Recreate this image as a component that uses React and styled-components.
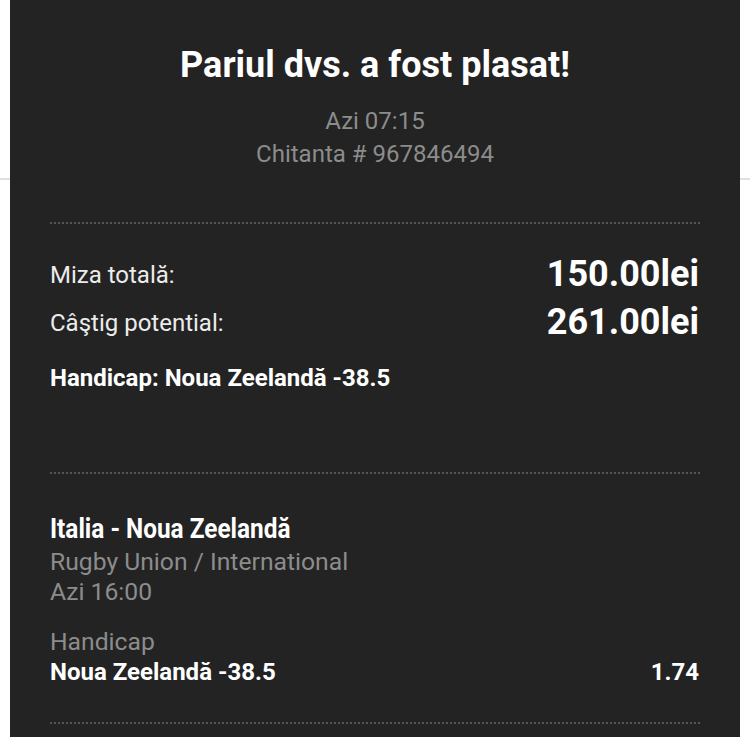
import React from 'react';
import styled, { createGlobalStyle } from 'styled-components';

const GlobalStyle = createGlobalStyle`
  html, body {
    margin: 0;
    padding: 0;
    background: #ffffff;
    font-family: Roboto, "Noto Sans", sans-serif;
    overflow: hidden;
  }
`;

const Page = styled.div`
  position: relative;
  width: 750px;
  height: 737px;
`;

const BackHeader = styled.div`
  height: 178px;
  border-bottom: 2px solid #e0e0e0;
`;

const Receipt = styled.div`
  position: absolute;
  top: 0;
  left: 10px;
  width: 730px;
  height: 737px;
  box-sizing: border-box;
  background: #232323;
  padding: 45px 40px 0;
  color: #fff;
`;

const Title = styled.h1`
  margin: 0;
  font-size: 36px;
  line-height: 40px;
  font-weight: 700;
  text-align: center;
`;

const Meta = styled.div`
  margin-top: 20px;
  text-align: center;
  color: #8c8c8c;
  font-size: 24px;
  line-height: 33px;
`;

const Divider = styled.div`
  height: 2px;
  margin-top: ${({ $gap }) => $gap}px;
  background-image: linear-gradient(to right, #555 50%, transparent 50%);
  background-size: 4px 2px;
`;

const StakeRow = styled.div`
  display: flex;
  justify-content: space-between;
  align-items: flex-start;
  margin-top: ${({ $first }) => ($first ? 26 : 0)}px;
`;

const Label = styled.span`
  margin-top: 10px;
  font-size: 24px;
  line-height: 30px;
  color: #ececec;
`;

const Amount = styled.span`
  padding-right: 1px;
  font-size: 36px;
  line-height: 48px;
  font-weight: 700;
`;

const Selection = styled.div`
  margin-top: 17px;
  font-size: 24px;
  line-height: 30px;
  font-weight: 700;
`;

const Event = styled.div`
  margin-top: 36px;
`;

const EventName = styled.div`
  font-size: 28px;
  line-height: 37px;
  font-weight: 700;

  span {
    display: inline-block;
    transform: scaleX(0.87);
    transform-origin: left center;
  }
`;

const Info = styled.div`
  font-size: 24.7px;
  line-height: 30px;
  color: #8c8c8c;
  margin-top: ${({ $gap }) => $gap || 0}px;
`;

const PickRow = styled.div`
  display: flex;
  justify-content: space-between;
  align-items: baseline;
  font-size: 24px;
  line-height: 30px;
  font-weight: 700;

  span:last-child {
    padding-right: 1px;
  }
`;

export default function App() {
  return (
    <Page>
      <GlobalStyle />
      <BackHeader />
      <Receipt>
        <Title>Pariul dvs. a fost plasat!</Title>
        <Meta>
          <div>Azi 07:15</div>
          <div>Chitanta # 967846494</div>
        </Meta>
        <Divider $gap={51} />
        <StakeRow $first>
          <Label>Miza totală:</Label>
          <Amount>150.00lei</Amount>
        </StakeRow>
        <StakeRow>
          <Label>Câştig potential:</Label>
          <Amount>261.00lei</Amount>
        </StakeRow>
        <Selection>Handicap: Noua Zeelandă -38.5</Selection>
        <Divider $gap={79} />
        <Event>
          <EventName>
            <span>Italia - Noua Zeelandă</span>
          </EventName>
          <Info>Rugby Union / International</Info>
          <Info>Azi 16:00</Info>
          <Info $gap={20}>Handicap</Info>
          <PickRow>
            <span>Noua Zeelandă -38.5</span>
            <span>1.74</span>
          </PickRow>
        </Event>
        <Divider $gap={35} />
      </Receipt>
    </Page>
  );
}
